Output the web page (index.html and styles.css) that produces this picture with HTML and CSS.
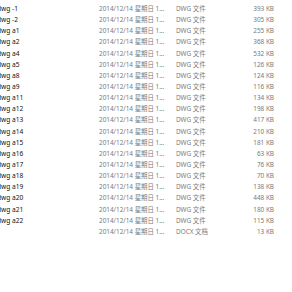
FILE: index.html
```html
<!DOCTYPE html>
<html lang="zh-CN">
<head>
<meta charset="utf-8">
<title>文件列表</title>
<link rel="stylesheet" href="styles.css">
</head>
<body>
<div class="list">
  <div class="row"><span class="name">dwg -1</span><span class="date">2014/12/14 星期日 1...</span><span class="type">DWG 文件</span><span class="size">393 KB</span></div>
  <div class="row"><span class="name">dwg -2</span><span class="date">2014/12/14 星期日 1...</span><span class="type">DWG 文件</span><span class="size">305 KB</span></div>
  <div class="row"><span class="name">dwg a1</span><span class="date">2014/12/14 星期日 1...</span><span class="type">DWG 文件</span><span class="size">255 KB</span></div>
  <div class="row"><span class="name">dwg a2</span><span class="date">2014/12/14 星期日 1...</span><span class="type">DWG 文件</span><span class="size">368 KB</span></div>
  <div class="row"><span class="name">dwg a4</span><span class="date">2014/12/14 星期日 1...</span><span class="type">DWG 文件</span><span class="size">532 KB</span></div>
  <div class="row"><span class="name">dwg a5</span><span class="date">2014/12/14 星期日 1...</span><span class="type">DWG 文件</span><span class="size">126 KB</span></div>
  <div class="row"><span class="name">dwg a8</span><span class="date">2014/12/14 星期日 1...</span><span class="type">DWG 文件</span><span class="size">124 KB</span></div>
  <div class="row"><span class="name">dwg a9</span><span class="date">2014/12/14 星期日 1...</span><span class="type">DWG 文件</span><span class="size">116 KB</span></div>
  <div class="row"><span class="name">dwg a11</span><span class="date">2014/12/14 星期日 1...</span><span class="type">DWG 文件</span><span class="size">134 KB</span></div>
  <div class="row"><span class="name">dwg a12</span><span class="date">2014/12/14 星期日 1...</span><span class="type">DWG 文件</span><span class="size">198 KB</span></div>
  <div class="row"><span class="name">dwg a13</span><span class="date">2014/12/14 星期日 1...</span><span class="type">DWG 文件</span><span class="size">417 KB</span></div>
  <div class="row"><span class="name">dwg a14</span><span class="date">2014/12/14 星期日 1...</span><span class="type">DWG 文件</span><span class="size">210 KB</span></div>
  <div class="row"><span class="name">dwg a15</span><span class="date">2014/12/14 星期日 1...</span><span class="type">DWG 文件</span><span class="size">181 KB</span></div>
  <div class="row"><span class="name">dwg a16</span><span class="date">2014/12/14 星期日 1...</span><span class="type">DWG 文件</span><span class="size">63 KB</span></div>
  <div class="row"><span class="name">dwg a17</span><span class="date">2014/12/14 星期日 1...</span><span class="type">DWG 文件</span><span class="size">76 KB</span></div>
  <div class="row"><span class="name">dwg a18</span><span class="date">2014/12/14 星期日 1...</span><span class="type">DWG 文件</span><span class="size">70 KB</span></div>
  <div class="row"><span class="name">dwg a19</span><span class="date">2014/12/14 星期日 1...</span><span class="type">DWG 文件</span><span class="size">138 KB</span></div>
  <div class="row"><span class="name">dwg a20</span><span class="date">2014/12/14 星期日 1...</span><span class="type">DWG 文件</span><span class="size">448 KB</span></div>
  <div class="row"><span class="name">dwg a21</span><span class="date">2014/12/14 星期日 1...</span><span class="type">DWG 文件</span><span class="size">180 KB</span></div>
  <div class="row"><span class="name">dwg a22</span><span class="date">2014/12/14 星期日 1...</span><span class="type">DWG 文件</span><span class="size">115 KB</span></div>
  <div class="row"><span class="name"></span><span class="date">2014/12/14 星期日 1...</span><span class="type">DOCX 文档</span><span class="size">13 KB</span></div>
</div>
</body>
</html>
```

FILE: styles.css
```css
/* 文件列表（详细信息视图） */
html,body{margin:0;background:#fff;overflow:hidden}
body{font-family:"Noto Sans","Noto Sans CJK SC",sans-serif;font-size:6.4px;color:#7a7a7a}

.list{padding-top:3px;margin-left:-3px}
.row{display:grid;grid-template-columns:102px 77px 64px 34px;
     height:11.15px;align-items:center;white-space:nowrap}
.name{color:#111;font-size:6.6px;overflow:hidden}
.date,.type{overflow:hidden}
.size{text-align:right}
```
